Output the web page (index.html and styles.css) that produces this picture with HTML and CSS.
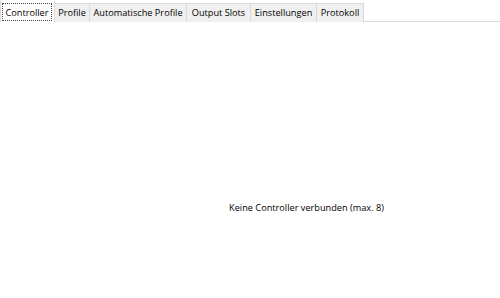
FILE: index.html
```html
<!DOCTYPE html>
<html>
<head>
<meta charset="utf-8">
<link rel="stylesheet" href="styles.css">
</head>
<body>
<div class="tabcontrol">
  <div class="tabstrip">
    <div class="tab active"><span class="focus">Controller</span></div>
    <div class="tab w-profile">Profile</div>
    <div class="tab w-auto">Automatische Profile</div>
    <div class="tab w-output">Output Slots</div>
    <div class="tab w-settings">Einstellungen</div>
    <div class="tab w-log">Protokoll</div>
  </div>
  <div class="page">
    <div class="empty">Keine Controller verbunden (max. 8)</div>
  </div>
</div>
</body>
</html>
```
FILE: styles.css
```css
html, body {
  margin: 0;
  padding: 0;
  background: #ffffff;
  width: 500px;
  height: 298px;
  overflow: hidden;
  font-family: "Open Sans", "Noto Sans", sans-serif;
  font-size: 9.2px;
  color: #000;
}
.tabcontrol {
  display: flex;
  flex-direction: column;
  height: 298px;
}
.tabstrip {
  display: flex;
  align-items: flex-end;
  height: 21px;
  border-bottom: 1px solid #d9d9d9;
}
.tab {
  box-sizing: border-box;
  height: 19px;
  background: #f0f0f0;
  border: 1px solid #d9d9d9;
  border-bottom: none;
  margin-left: -1px;
  margin-bottom: -1px;
  display: flex;
  align-items: center;
  justify-content: center;
  white-space: nowrap;
  padding-bottom: 1px;
}
.w-profile { width: 36px; }
.w-auto { width: 98px; }
.w-output { width: 65px; }
.w-settings { width: 67px; }
.w-log { width: 48px; }
.tab.active {
  width: 55px;
  height: 22px;
  margin-left: 0;
  background: #ffffff;
  padding: 2px 2px 1px 1px;
  position: relative;
  z-index: 1;
  border-color: #ffffff #d9d9d9 transparent #d9d9d9;
}
.focus {
  box-sizing: border-box;
  width: 100%;
  height: 100%;
  border: 1px dotted #444;
  display: flex;
  align-items: center;
  justify-content: center;
}
.page {
  flex: 1;
  display: flex;
  justify-content: center;
  padding-left: 113px;
  padding-top: 179px;
}
.empty {
  white-space: nowrap;
  line-height: 14px;
}
```
